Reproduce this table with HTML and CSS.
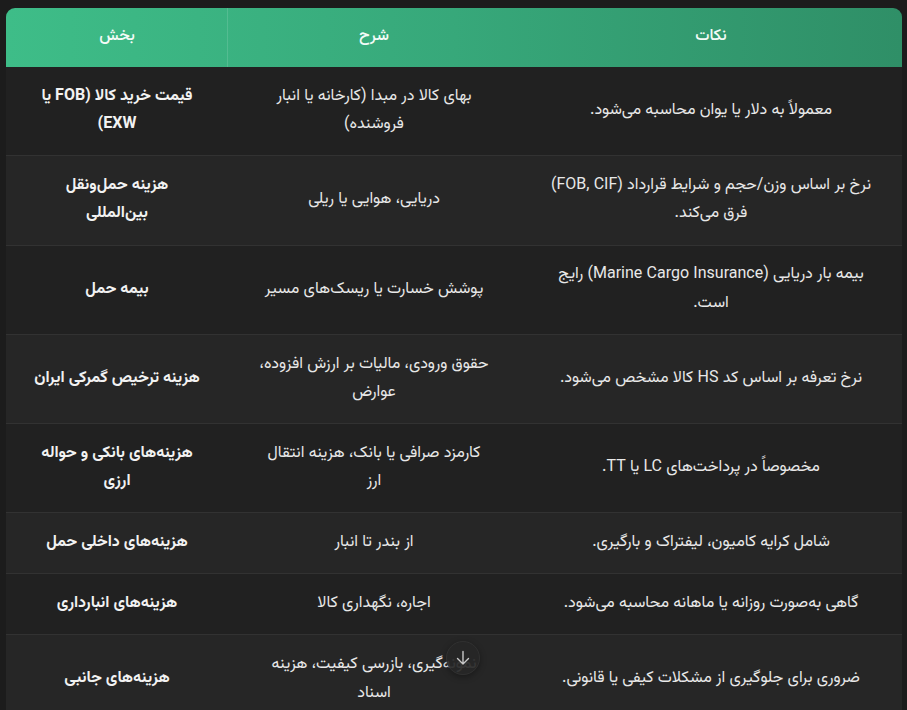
FILE: index.html
```html
<!DOCTYPE html>
<html lang="fa">
<head>
<meta charset="utf-8">
<title>هزینه‌ها</title>
<link rel="stylesheet" href="styles.css">
</head>
<body>
<div class="wrap">
<table class="cost-table">
  <colgroup>
    <col class="c1"><col class="c2"><col class="c3">
  </colgroup>
  <thead>
    <tr>
      <th class="h1">بخش</th>
      <th class="h2">شرح</th>
      <th class="h3">نکات</th>
    </tr>
  </thead>
  <tbody>
    <tr>
      <td class="name">قیمت خرید کالا (FOB یا EXW)</td>
      <td class="desc">بهای کالا در مبدا (کارخانه یا انبار فروشنده)</td>
      <td class="note">معمولاً به دلار یا یوان محاسبه می‌شود.</td>
    </tr>
    <tr>
      <td class="name">هزینه حمل‌ونقل بین‌المللی</td>
      <td class="desc">دریایی، هوایی یا ریلی</td>
      <td class="note">نرخ بر اساس وزن/حجم و شرایط قرارداد (FOB, CIF) فرق می‌کند.</td>
    </tr>
    <tr>
      <td class="name">بیمه حمل</td>
      <td class="desc">پوشش خسارت یا ریسک‌های مسیر</td>
      <td class="note">بیمه بار دریایی (Marine Cargo Insurance) رایج است.</td>
    </tr>
    <tr>
      <td class="name">هزینه ترخیص گمرکی ایران</td>
      <td class="desc">حقوق ورودی، مالیات بر ارزش افزوده، عوارض</td>
      <td class="note">نرخ تعرفه بر اساس کد HS کالا مشخص می‌شود.</td>
    </tr>
    <tr>
      <td class="name">هزینه‌های بانکی و حواله ارزی</td>
      <td class="desc">کارمزد صرافی یا بانک، هزینه انتقال ارز</td>
      <td class="note">مخصوصاً در پرداخت‌های LC یا TT.</td>
    </tr>
    <tr>
      <td class="name">هزینه‌های داخلی حمل</td>
      <td class="desc">از بندر تا انبار</td>
      <td class="note">شامل کرایه کامیون، لیفتراک و بارگیری.</td>
    </tr>
    <tr>
      <td class="name">هزینه‌های انبارداری</td>
      <td class="desc">اجاره، نگهداری کالا</td>
      <td class="note">گاهی به‌صورت روزانه یا ماهانه محاسبه می‌شود.</td>
    </tr>
    <tr>
      <td class="name">هزینه‌های جانبی</td>
      <td class="desc">نمونه‌گیری، بازرسی کیفیت، هزینه اسناد</td>
      <td class="note">ضروری برای جلوگیری از مشکلات کیفی یا قانونی.</td>
    </tr>
  </tbody>
</table>
</div>
<button class="scroll-btn" aria-label="scroll down">
  <svg width="18" height="18" viewBox="0 0 18 18" fill="none" stroke="#c8c8c8" stroke-width="1.4" stroke-linecap="round" stroke-linejoin="round"><path d="M9 2.5v12.5M3.5 9.5 9 15l5.5-5.5"/></svg>
</button>
</body>
</html>
```
FILE: styles.css
```css
html, body {
  margin: 0;
  padding: 0;
  background: #1c1c1c;
  height: 100%;
  overflow: hidden;
}
body {
  font-family: "Vazirmatn", "Noto Sans Arabic", "DejaVu Sans", sans-serif;
  color: #e8e8e8;
}
.wrap {
  padding: 8px 5px 0 6px;
}
.cost-table {
  width: 896px;
  border-collapse: collapse;
  table-layout: fixed;
  font-size: 16px;
  line-height: 28.3px;
}
.c1 { width: 222px; }
.c2 { width: 292px; }
.c3 { width: 382px; }
thead th {
  background-image: linear-gradient(90deg, #3ebd88 0%, #37a87a 50%, #2f8f67 100%);
  background-size: 896px 100%;
  background-repeat: no-repeat;
  color: #f3fbf7;
  font-weight: 500;
  font-size: 16px;
  height: 59px;
  padding: 0 16px;
  text-align: center;
  direction: rtl;
}
thead th.h1 {
  background-position: 0 0;
  border-top-left-radius: 9px;
  box-shadow: inset -1px 0 0 rgba(255,255,255,0.13);
}
thead th.h2 { background-position: -222px 0; }
thead th.h3 {
  background-position: -514px 0;
  border-top-right-radius: 9px;
}
tbody td {
  padding: 15.85px 24px;
  text-align: center;
  direction: rtl;
  border-bottom: 1px solid #323232;
  vertical-align: middle;
}
tbody td.name {
  padding-left: 27px;
  padding-right: 27px;
  font-weight: 700;
  color: #f2f2f2;
}
tbody td.desc {
  padding-left: 30.5px;
  padding-right: 30.5px;
}
tbody tr:nth-child(odd) td { background: #212121; }
tbody tr:nth-child(even) td { background: #262626; }
.scroll-btn {
  position: absolute;
  left: 446px;
  top: 641px;
  width: 34px;
  height: 34px;
  border-radius: 50%;
  border: 1px solid #303030;
  background: rgba(38, 38, 38, 0.92);
  display: flex;
  align-items: center;
  justify-content: center;
  padding: 0;
  box-shadow: 0 2px 6px rgba(0,0,0,0.35);
}
```
